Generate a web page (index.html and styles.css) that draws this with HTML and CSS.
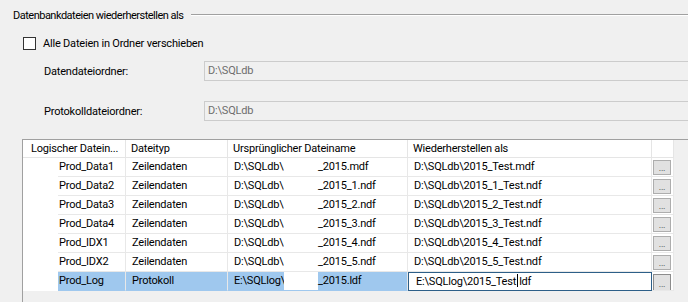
FILE: index.html
```html
<!DOCTYPE html>
<html lang="de">
<head>
    <meta charset="UTF-8">
    <title>Datenbankdateien wiederherstellen als</title>
    <link rel="stylesheet" href="styles.css">
</head>
<body>

<div class="group-head">
    <span class="group-title">Datenbankdateien wiederherstellen als</span>
    <div class="rule"></div>
</div>

<div class="check-row">
    <span class="box"></span>
    <span class="check-label">Alle Dateien in Ordner verschieben</span>
</div>

<div class="field field-data">
    <span class="field-label">Datendateiordner:</span>
    <div class="textbox">D:\SQLdb</div>
</div>

<div class="field field-log">
    <span class="field-label">Protokolldateiordner:</span>
    <div class="textbox">D:\SQLdb</div>
</div>

<div class="grid">
    <div class="head">
        <div class="h1">Logischer Datein...</div>
        <div>Dateityp</div>
        <div>Ursprünglicher Dateiname</div>
        <div>Wiederherstellen als</div>
        <div></div>
    </div>

    <div class="row">
        <div class="pad"></div>
        <div class="c1">Prod_Data1</div>
        <div>Zeilendaten</div>
        <div class="orig"><span class="path">D:\SQLdb\</span><span class="mask"></span><span>_2015.mdf</span></div>
        <div>D:\SQLdb\2015_Test.mdf</div>
        <div class="btn-cell"><span class="dots">...</span></div>
    </div>
    <div class="row">
        <div class="pad"></div>
        <div class="c1">Prod_Data2</div>
        <div>Zeilendaten</div>
        <div class="orig"><span class="path">D:\SQLdb\</span><span class="mask"></span><span>_2015_1.ndf</span></div>
        <div>D:\SQLdb\2015_1_Test.ndf</div>
        <div class="btn-cell"><span class="dots">...</span></div>
    </div>
    <div class="row">
        <div class="pad"></div>
        <div class="c1">Prod_Data3</div>
        <div>Zeilendaten</div>
        <div class="orig"><span class="path">D:\SQLdb\</span><span class="mask"></span><span>_2015_2.ndf</span></div>
        <div>D:\SQLdb\2015_2_Test.ndf</div>
        <div class="btn-cell"><span class="dots">...</span></div>
    </div>
    <div class="row">
        <div class="pad"></div>
        <div class="c1">Prod_Data4</div>
        <div>Zeilendaten</div>
        <div class="orig"><span class="path">D:\SQLdb\</span><span class="mask"></span><span>_2015_3.ndf</span></div>
        <div>D:\SQLdb\2015_3_Test.ndf</div>
        <div class="btn-cell"><span class="dots">...</span></div>
    </div>
    <div class="row">
        <div class="pad"></div>
        <div class="c1">Prod_IDX1</div>
        <div>Zeilendaten</div>
        <div class="orig"><span class="path">D:\SQLdb\</span><span class="mask"></span><span>_2015_4.ndf</span></div>
        <div>D:\SQLdb\2015_4_Test.ndf</div>
        <div class="btn-cell"><span class="dots">...</span></div>
    </div>
    <div class="row">
        <div class="pad"></div>
        <div class="c1">Prod_IDX2</div>
        <div>Zeilendaten</div>
        <div class="orig"><span class="path">D:\SQLdb\</span><span class="mask"></span><span>_2015_5.ndf</span></div>
        <div>D:\SQLdb\2015_5_Test.ndf</div>
        <div class="btn-cell"><span class="dots">...</span></div>
    </div>
    <div class="row sel">
        <div class="pad"></div>
        <div class="c1">Prod_Log</div>
        <div>Protokoll</div>
        <div class="orig"><span class="path">E:\SQLlog\</span><span class="mask"></span><span>_2015.ldf</span></div>
        <div class="edit">E:\SQLlog\2015_Test<span class="caret"></span>ldf</div>
        <div class="btn-cell"><span class="dots focus">...</span></div>
    </div>
</div>

</body>
</html>
```

FILE: styles.css
```css
body {
    margin: 0;
    height: 302px;
    overflow: hidden;
    background-color: #f0f0f0;
    font-family: Roboto, "Liberation Sans", sans-serif;
    font-size: 11px;
    letter-spacing: -0.2px;
    color: #000;
}
.group-head {
    display: flex;
    align-items: center;
    height: 30px;
    padding-left: 13px;
}
.group-title {
    letter-spacing: -0.5px;
}
.rule {
    flex: 1;
    margin-left: 8px;
    border-top: 1px solid #a0a0a0;
    border-bottom: 1px solid #fff;
}
.check-row {
    display: flex;
    align-items: center;
    height: 13px;
    margin: 7px 0 0 23px;
}
.box {
    width: 11px;
    height: 11px;
    border: 1px solid #333;
    background-color: #fff;
}
.check-label {
    margin-left: 7px;
}
.field {
    display: flex;
    align-items: center;
    height: 20px;
    margin-left: 44px;
}
.field-data {
    margin-top: 11px;
}
.field-log {
    margin-top: 20px;
}
.field-label {
    width: 160px;
}
.textbox {
    flex: 1;
    height: 18px;
    line-height: 18px;
    padding-left: 3px;
    border: 1px solid #cccccc;
    border-right: none;
    color: #6d6d6d;
}
.grid {
    margin: 18px 0 0 22px;
    height: 162px;
    border-left: 1px solid #a0a0a0;
    border-top: 1px solid #a0a0a0;
}
.head {
    display: grid;
    grid-template-columns: 103px 102px 180px 244px 22px;
    height: 18px;
}
.head > div {
    box-sizing: border-box;
    padding-left: 5px;
    line-height: 17px;
    background-color: #fff;
    border-right: 1px solid #e5e5e5;
    border-bottom: 1px solid #e5e5e5;
    white-space: nowrap;
    overflow: hidden;
}
.head > .h1 {
    padding-left: 8px;
}
.row {
    display: grid;
    grid-template-columns: 35px 68px 102px 180px 244px 22px;
    height: 19px;
}
.row > div {
    box-sizing: border-box;
    padding-left: 6px;
    line-height: 18px;
    background-color: #fff;
    border-right: 1px solid #e8e8e8;
    border-bottom: 1px solid #e8e8e8;
    white-space: nowrap;
    overflow: hidden;
}
.row > .pad {
    border: none;
}
.row > .c1 {
    padding-left: 1px;
}
.orig {
    display: flex;
}
.path {
    width: 50px;
    overflow: hidden;
}
.mask {
    width: 34px;
    background-color: #fff;
}
.row > .btn-cell {
    padding: 2px 0 0 1px;
}
.dots {
    display: block;
    box-sizing: border-box;
    width: 18px;
    height: 15px;
    border: 1px solid #adadad;
    background-color: #e1e1e1;
    font-size: 9px;
    line-height: 15px;
    text-align: center;
    color: #333;
}
.dots.focus {
    height: 17px;
    line-height: 18px;
    border-color: #8c8c8c;
}
.sel > .c1,
.sel > div:nth-child(3),
.sel > .orig {
    background-color: #9fc8ee;
    border-color: #9fc8ee;
    border-right-color: #e8e8e8;
}
.row > .edit {
    border: 1px solid #2d5f88;
    padding-left: 7px;
    line-height: 17px;
}
.caret {
    display: inline-block;
    width: 1px;
    height: 13px;
    margin: 0 1px;
    vertical-align: -2px;
    background-color: #000;
}
```
